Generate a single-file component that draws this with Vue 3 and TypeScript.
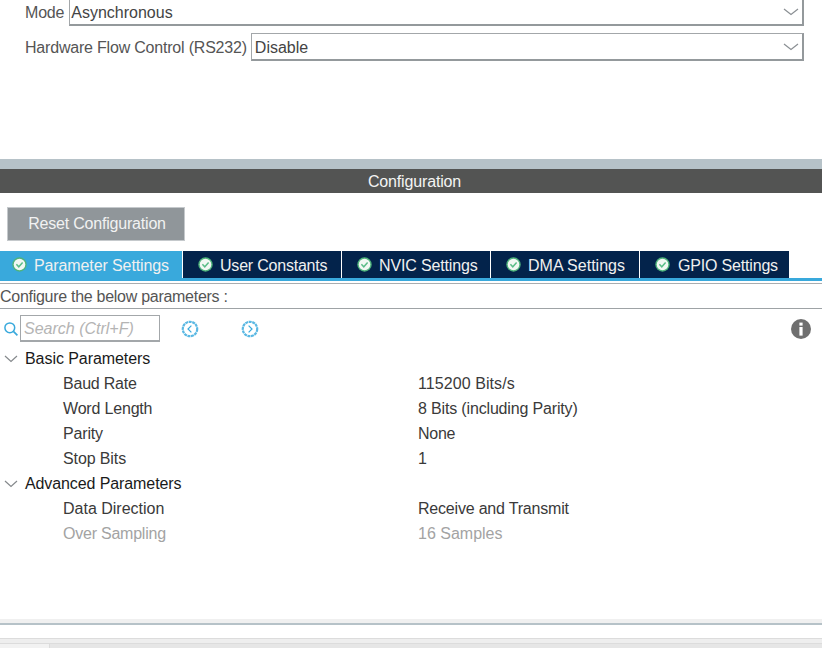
<script setup lang="ts">
interface Row { label: string; value?: string; muted?: boolean; group?: boolean; nameTrack?: number; valueTrack?: number }
interface Tab { label: string; track: number }

const tabs: Tab[] = [
  { label: 'Parameter Settings', track: -0.11 },
  { label: 'User Constants', track: -0.21 },
  { label: 'NVIC Settings', track: -0.15 },
  { label: 'DMA Settings', track: 0 },
  { label: 'GPIO Settings', track: -0.18 },
]

const rows: Row[] = [
  { label: 'Basic Parameters', group: true, nameTrack: -0.06 },
  { label: 'Baud Rate', value: '115200 Bits/s', nameTrack: -0.22, valueTrack: 0.08 },
  { label: 'Word Length', value: '8 Bits (including Parity)', nameTrack: -0.18, valueTrack: -0.16 },
  { label: 'Parity', value: 'None', nameTrack: -0.17, valueTrack: -0.25 },
  { label: 'Stop Bits', value: '1', nameTrack: -0.11, valueTrack: 0 },
  { label: 'Advanced Parameters', group: true, nameTrack: -0.1 },
  { label: 'Data Direction', value: 'Receive and Transmit', nameTrack: 0, valueTrack: -0.2 },
  { label: 'Over Sampling', value: '16 Samples', muted: true, nameTrack: -0.23, valueTrack: 0 },
]

const track = (v?: number): { letterSpacing: string } => ({ letterSpacing: `${v ?? 0}px` })
</script>

<template>
  <div class="page">
    <section class="modes">
      <div class="mode-row first">
        <span class="mode-label">Mode</span>
        <div class="select select-a">
          <span>Asynchronous</span>
          <svg class="sel-arrow" width="16" height="8" viewBox="0 0 16 8"><path d="M1 1l7 5.5L15 1" fill="none" stroke="#8a8f93" stroke-width="1.2" /></svg>
        </div>
      </div>
      <div class="mode-row">
        <span class="mode-label">Hardware Flow Control (RS232)</span>
        <div class="select">
          <span>Disable</span>
          <svg class="sel-arrow" width="16" height="8" viewBox="0 0 16 8"><path d="M1 1l7 5.5L15 1" fill="none" stroke="#8a8f93" stroke-width="1.2" /></svg>
        </div>
      </div>
    </section>

    <div class="band"></div>
    <header class="title">Configuration</header>

    <div class="toolbar">
      <button class="reset" type="button">Reset Configuration</button>
    </div>

    <nav class="tabs">
      <div v-for="(tab, i) in tabs" :key="tab.label" class="tab" :class="[`tab-${i}`, { active: i === 0 }]">
        <svg class="check" width="15" height="15" viewBox="0 0 15 15">
          <circle cx="7.5" cy="7.5" r="7.2" fill="#4fb37c" />
          <circle cx="7.5" cy="7.5" r="5.8" fill="#f2f8f3" />
          <path d="M4.4 7.2l2.4 2.6 3.8-4.2" fill="none" stroke="#5bbd88" stroke-width="1.5" />
        </svg>
        <span class="tab-text" :style="track(tab.track)">{{ tab.label }}</span>
      </div>
    </nav>
    <div class="tab-rule"></div>

    <div class="configure">Configure the below parameters :</div>

    <div class="search-bar">
      <svg class="lens" width="16" height="16" viewBox="0 0 16 16">
        <circle cx="6.8" cy="6.8" r="4.9" fill="none" stroke="#39a9dc" stroke-width="1.5" />
        <path d="M10.4 10.4l4 4" stroke="#39a9dc" stroke-width="1.7" />
      </svg>
      <div class="search">Search (Ctrl+F)</div>
      <svg class="nav-btn prev" width="18" height="18" viewBox="0 0 18 18">
        <circle cx="9" cy="9" r="7.2" fill="none" stroke="#5ab8e3" stroke-width="2.2" stroke-dasharray="3 .6" />
        <path d="M10.4 5.6L7 9l3.4 3.4" fill="none" stroke="#39a9dc" stroke-width="1.2" />
      </svg>
      <svg class="nav-btn next" width="18" height="18" viewBox="0 0 18 18">
        <circle cx="9" cy="9" r="7.2" fill="none" stroke="#5ab8e3" stroke-width="2.2" stroke-dasharray="3 .6" />
        <path d="M7.6 5.6L11 9l-3.4 3.4" fill="none" stroke="#39a9dc" stroke-width="1.2" />
      </svg>
      <svg class="info" width="20" height="20" viewBox="0 0 20 20">
        <circle cx="10" cy="10" r="10" fill="#6f6f6f" />
        <rect x="8.4" y="3.6" width="3.2" height="3" fill="#fff" />
        <rect x="8.4" y="8" width="3.2" height="8.6" fill="#fff" />
      </svg>
    </div>

    <div class="params">
      <div v-for="row in rows" :key="row.label" class="param" :class="{ group: row.group, muted: row.muted }">
        <template v-if="row.group">
          <svg class="caret" width="14" height="8" viewBox="0 0 14 8"><path d="M1 1l6 5.5L13 1" fill="none" stroke="#85898c" stroke-width="1.2" /></svg>
          <span :style="track(row.nameTrack)">{{ row.label }}</span>
        </template>
        <template v-else>
          <span class="p-name"><span :style="track(row.nameTrack)">{{ row.label }}</span></span>
          <span class="p-value" :style="track(row.valueTrack)">{{ row.value }}</span>
        </template>
      </div>
    </div>

    <footer class="bottom">
      <div class="b-light"></div>
      <div class="band thin"></div>
      <div class="b-white"></div>
      <div class="b-strip"></div>
      <div class="b-tabs"><div class="b-tab"></div></div>
    </footer>
  </div>
</template>

<style>
html, body { margin: 0; background: #fff; }
</style>

<style scoped>
.page {
  width: 822px;
  height: 648px;
  overflow: hidden;
  background: #fff;
  display: flex;
  flex-direction: column;
  font-family: "Liberation Sans", Arial, sans-serif;
  font-size: 16px;
  color: #3a3a3a;
}
.modes {
  height: 159px;
  flex: none;
  padding-left: 25px;
  padding-right: 18px;
  box-sizing: border-box;
  display: flex;
  flex-direction: column;
  gap: 7px;
}
.mode-row {
  display: flex;
  align-items: center;
  height: 28px;
  gap: 4px;
  flex: none;
}
.mode-row.first { margin-top: -2px; gap: 5px; }
.mode-label { color: #555; white-space: nowrap; letter-spacing: -0.2px; padding-top: 2px; }
.select {
  flex: 1;
  height: 28px;
  box-sizing: border-box;
  border: 1px solid #a0a4a7;
  border-width: 1px 2px 2px 1px;
  border-color: #a3a7aa #94999c #94999c #a3a7aa;
  padding: 2px 0 0 3px;
  display: flex;
  align-items: center;
  justify-content: space-between;
  color: #444;
}
.select-a { padding-left: 1px; }
.sel-arrow { margin-right: 3px; margin-top: -2px; }
.band { height: 10px; background: #b6c2c8; flex: none; }
.title {
  height: 24px;
  flex: none;
  background: #535453;
  color: #f4f4f4;
  text-align: center;
  line-height: 26px;
  padding-left: 7px;
  box-sizing: border-box;
  letter-spacing: -0.15px;
}
.toolbar { height: 58px; flex: none; padding: 14px 0 0 7px; box-sizing: border-box; }
.reset {
  width: 178px;
  height: 34px;
  background: #90969a;
  border: 1px solid #c5c9cc;
  color: #f2f2f2;
  font: inherit;
  letter-spacing: -0.2px;
  padding: 0 0 0 2px;
}
.tabs {
  display: flex;
  height: 30px;
  flex: none;
  gap: 1px;
}
.tab {
  height: 27px;
  background: #03234b;
  color: #f0f0f0;
  display: flex;
  align-items: center;
  gap: 7px;
  box-sizing: border-box;
  white-space: nowrap;
}
.tab-0 { width: 182px; padding-left: 12px; }
.tab-1 { width: 158px; padding-left: 15px; }
.tab-2 { width: 148px; padding-left: 15px; }
.tab-3 { width: 148px; padding-left: 15px; }
.tab-4 { width: 149px; padding-left: 15px; gap: 8px; }
.tab.active { background: #39a9dc; height: 30px; padding-bottom: 3px; }
.check { flex: none; margin-top: -1px; }
.tab-text { margin-top: 2px; }
.tab-rule {
  height: 6px;
  flex: none;
  box-sizing: border-box;
  border-top: 3px solid #39a9dc;
  border-bottom: 1px solid #a9adb0;
  margin-top: -3px;
}
.configure {
  height: 25px;
  flex: none;
  box-sizing: border-box;
  border-bottom: 1px solid #9ea3a6;
  line-height: 26px;
  color: #555;
  white-space: nowrap;
  letter-spacing: -0.28px;
}
.search-bar {
  height: 37px;
  flex: none;
  display: flex;
  align-items: center;
  padding: 2px 11px 0 3px;
  box-sizing: border-box;
}
.lens { flex: none; margin-right: 1px; }
.search {
  width: 140px;
  height: 27px;
  box-sizing: border-box;
  border: 1px solid #a3a7aa;
  border-bottom-width: 2px;
  font-style: italic;
  color: #b4b4b4;
  line-height: 26px;
  padding-left: 3px;
  white-space: nowrap;
}
.nav-btn { flex: none; }
.prev { margin-left: 21px; }
.next { margin-left: 42px; }
.info { margin-left: auto; }
.params {
  flex: 1;
}
.param {
  height: 25px;
  display: flex;
  align-items: center;
  color: #3a3a3a;
  white-space: nowrap;
}
.param.group { color: #1a1a1a; padding-left: 4px; gap: 7px; }
.caret { flex: none; }
.p-name { width: 355px; margin-left: 63px; flex: none; }
.param.muted { color: #a3a3a3; }
.bottom { height: 29px; flex: none; display: flex; flex-direction: column; }
.b-light { height: 4px; background: #f0f0f0; flex: none; }
.band.thin { height: 2px; }
.b-white { height: 13px; background: #fff; flex: none; }
.b-strip { height: 5px; background: #eeeeee; border-top: 1px solid #dcdcdc; box-sizing: border-box; flex: none; }
.b-tabs { height: 5px; background: #e6e6e6; border-top: 1px solid #dcdcdc; box-sizing: border-box; flex: none; }
.b-tab { width: 49px; height: 4px; background: #f2f2f2; border-right: 1px solid #dcdcdc; }
</style>
